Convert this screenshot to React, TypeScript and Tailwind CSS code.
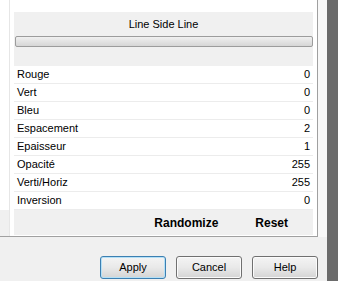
const rows = [
  { label: 'Rouge', value: 0 },
  { label: 'Vert', value: 0 },
  { label: 'Bleu', value: 0 },
  { label: 'Espacement', value: 2 },
  { label: 'Epaisseur', value: 1 },
  { label: 'Opacité', value: 255 },
  { label: 'Verti/Horiz', value: 255 },
  { label: 'Inversion', value: 0 },
]

function DialogButton({ label, primary }: { label: string; primary?: boolean }) {
  return (
    <button
      className={
        'h-[23px] w-[66px] rounded-[3px] border bg-linear-to-b from-[#f4f4f4] via-[#e9e9e9] to-[#d4d4d4] text-[11px] text-black ' +
        (primary
          ? 'border-[#3c7fb1] shadow-[inset_0_0_0_1px_#b4e0f7]'
          : 'border-[#707070] shadow-[inset_0_0_0_1px_#fbfbfb]')
      }
    >
      {label}
    </button>
  )
}

export default function App() {
  return (
    <div className="flex h-[281px] w-[338px] overflow-hidden bg-[#f0f0f0] font-['Liberation_Sans',Arial,sans-serif] text-[11px] text-black">
      <div className="flex w-[327px] flex-col">
        {/* Settings frame */}
        <div className="flex h-[237px]">
          <div className="flex w-[318px] border-r border-b border-[#a0a0a0] bg-white">
            {/* left strip */}
            <div className="flex w-[10px] flex-col border-r border-[#e6e6e6]">
              <div className="flex-1 bg-white" />
              <div className="h-[26px] bg-[#f0f0f0]" />
            </div>

            <div className="ml-[4px] mr-[4px] mt-[12px] flex w-[299px] flex-col">
              {/* Header */}
              <div className="flex h-[54px] flex-col items-center bg-[#f0f0f0] pt-[5px]">
                <div className="h-[14px] leading-[14px]">Line Side Line</div>
                <div className="mt-[5px] h-[11px] w-[298px] rounded-[2px] border border-[#9c9c9c] bg-linear-to-b from-[#f0f0f0] to-[#d6d6d6]" />
              </div>

              {/* Parameter rows */}
              <div className="flex flex-col">
                {rows.map((r) => (
                  <div
                    key={r.label}
                    className="flex h-[18px] items-center justify-between border-b border-[#ececec] bg-white pl-[3px] pr-[3px]"
                  >
                    <span>{r.label}</span>
                    <span>{r.value}</span>
                  </div>
                ))}
              </div>

              {/* Actions */}
              <div className="flex h-[25px] items-center justify-end gap-[37px] bg-[#f0f0f0] pr-[25px] text-[12px] font-bold">
                <span>Randomize</span>
                <span>Reset</span>
              </div>
            </div>
          </div>
          <div className="w-[9px] bg-[#f8f8f8]" />
        </div>

        {/* Dialog buttons */}
        <div className="flex flex-1 items-start justify-end gap-[10px] pr-[9px] pt-[19px]">
          <DialogButton label="Apply" primary />
          <DialogButton label="Cancel" />
          <DialogButton label="Help" />
        </div>
      </div>
      <div className="w-[11px] bg-[#6b6b6b]" />
    </div>
  )
}
